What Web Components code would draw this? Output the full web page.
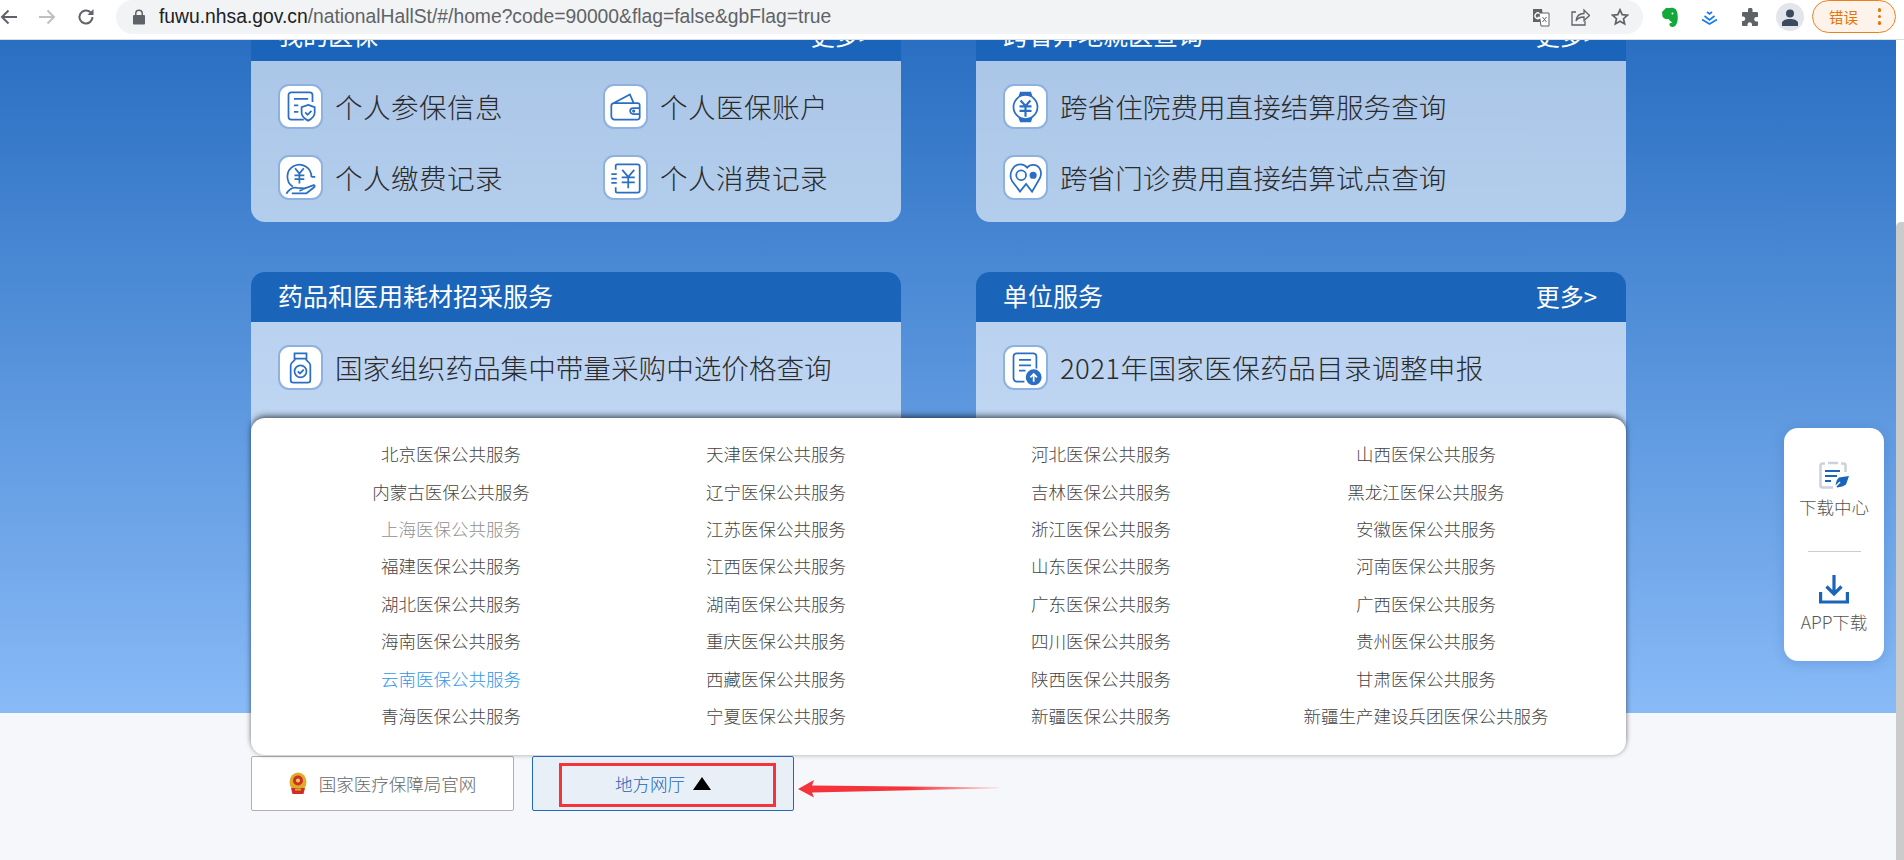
<!DOCTYPE html>
<html lang="zh">
<head>
<meta charset="utf-8">
<title>fuwu.nhsa.gov.cn</title>
<style>
html,body{margin:0;padding:0;height:860px;overflow:hidden;background:#f5f7fb;}
body{font-family:"Noto Sans CJK SC","Liberation Sans",sans-serif;display:flex;flex-direction:column;}
</style>
</head>
<body>
<browser-bar url-host="fuwu.nhsa.gov.cn" url-path="/nationalHallSt/#/home?code=90000&amp;flag=false&amp;gbFlag=true"></browser-bar>
<page-view>
  <service-card title="我的医保" more style="--body-h:161px">
    <div class="two" style="letter-spacing:.4px">
      <service-item icon="policy">个人参保信息</service-item>
      <service-item icon="wallet">个人医保账户</service-item>
      <service-item icon="pay">个人缴费记录</service-item>
      <service-item icon="bill">个人消费记录</service-item>
    </div>
  </service-card>
  <service-card title="跨省异地就医查询" more style="--body-h:161px">
    <service-item icon="watch">跨省住院费用直接结算服务查询</service-item>
    <service-item icon="pin">跨省门诊费用直接结算试点查询</service-item>
  </service-card>
  <service-card title="药品和医用耗材招采服务" style="--body-h:161px">
    <service-item icon="bottle">国家组织药品集中带量采购中选价格查询</service-item>
  </service-card>
  <service-card title="单位服务" more style="--body-h:161px">
    <service-item icon="upload" style="letter-spacing:.35px">2021年国家医保药品目录调整申报</service-item>
  </service-card>
</page-view>
<script>
const ICONS = {
  policy:'<path d="M19 28H7.500A2.500 2.500 0 0 1 5 25.500v-20A2.500 2.500 0 0 1 7.500 3h17A2.500 2.500 0 0 1 27 5.500V12M10 9h13M10 15h4M10 21h4"/><path d="M23 14.500l6 2.200v5c0 3.300-2.700 5.500-6 7.300-3.300-1.800-6-4-6-7.300v-5z"/><path d="M20.300 21.500l2.200 2.200 3.500-3.700"/>',
  wallet:'<path d="M6 13h21a2 2 0 0 1 2 2v11a2 2 0 0 1-2 2H6a3 3 0 0 1-3-3V15.500A2.500 2.500 0 0 1 5.500 13zM4 13.500L20 5l3.500 8"/><path d="M29 17.500h-6a2.500 2.500 0 0 0 0 5.500h6"/><circle cx="23.500" cy="20.200" r=".7"/>',
  pay:'<path d="M26 15.500a11 11 0 1 0-17 9M26 15.500h3.500"/><path d="M11 7.500l4 5 4-5M10.500 14h9M10.500 17.500h9M15 12.500v9"/><path d="M3 31c3-5 6-6.500 10-5.500l7 .5-5 2.500M20 26l8-3c1 0 1.500 1 .5 2l-7 5.500H8"/>',
  bill:'<path d="M7 9V5.500A1.500 1.500 0 0 1 8.500 4H27a2 2 0 0 1 2 2v22a2 2 0 0 1-2 2H8.500A1.500 1.500 0 0 1 7 28.500V25"/><path d="M3 13h5M3 17h5M3 21h5"/><path d="M13 9l5.500 6.500L24 9M12.500 16h12M12.500 20.500h12M18.500 15.500V26"/>',
  watch:'<circle cx="16" cy="16.500" r="11"/><path fill="#2a6fc4" stroke="none" d="M9.500 7l1.500-4.500h10L22.500 7c-4-2-9-2-13 0zM9.500 26l1.500 4.500h10l1.500-4.500c-4 2-9 2-13 0z"/><path stroke-width="2" d="M11.500 10.500l4.500 5 4.500-5M10.500 16h11M10.500 20h11M16 15.500V25.500"/>',
  pin:'<path d="M11 29L3.500 19C0 12 5 4 11.500 4c2.500 0 4.500 1 6 3 1.500-2 3.500-2.500 5.500-2.500 6 0 9 6.500 6 12.500L22 29l-5.500-7z"/><circle cx="12" cy="14" r="4.500"/><circle cx="23" cy="14" r="2.500" fill="#2a6fc4"/>',
  bottle:'<path d="M10.500 3h11v5h-11z"/><path d="M11 8c0 2.500-4 3-4 6v13.500A2.500 2.500 0 0 0 9.500 30h13a2.500 2.500 0 0 0 2.500-2.500V14c0-3-4-3.500-4-6"/><circle cx="16" cy="19.500" r="5.500"/><path d="M13.500 19.500l2 2 3.500-3.500"/>',
  upload:'<path d="M15 29H8a3 3 0 0 1-3-3V6a3 3 0 0 1 3-3h15a3 3 0 0 1 3 3v11M10 9h11M10 14h11M10 19h6"/><circle cx="23.500" cy="25" r="6.500" fill="#2a6fc4"/><path stroke="#fff" d="M23.500 29v-7M20.500 25l3-3 3 3"/>'
};

class BrowserBar extends HTMLElement{
  constructor(){
    super();
    this.attachShadow({mode:"open"});
  }
  connectedCallback(){
    this.shadowRoot.innerHTML = `
    <style>
      :host{display:flex;height:39px;background:#fff;border-bottom:1px solid #dadce0;position:relative;z-index:5;font-family:"Liberation Sans",Arial,sans-serif;}
      svg{display:block;flex:none;}
      .nav{display:flex;align-items:center;height:34px;width:116px;box-sizing:border-box;}
      .nav svg:nth-child(2){margin-left:20px;}
      .nav svg:nth-child(3){margin-left:21px;}
      .omni{width:1527px;height:34px;background:#f1f3f4;border-radius:17px;display:flex;align-items:center;box-sizing:border-box;padding-left:17px;}
      .url{margin-left:14px;font-size:19.300px;color:#5f6368;white-space:nowrap;flex:1;}
      .url b{font-weight:400;color:#202124;}
      .acts{display:flex;align-items:center;gap:21px;margin-right:14px;}
      .ext{display:flex;align-items:center;height:34px;margin-left:18px;}
      .ext .ev{margin-right:23px;}
      .ext .dd{margin-right:23px;}
      .avatar{margin-left:17px;width:28px;height:28px;border-radius:50%;background:#e2e5ea;display:flex;align-items:center;justify-content:center;}
      .err{margin-left:8px;width:84px;height:33px;box-sizing:border-box;border:1.500px solid #e8821e;border-radius:17px;background:#fef3ea;color:#e37400;font:14.500px "Noto Sans CJK SC",sans-serif;display:flex;align-items:center;padding-left:16px;justify-content:space-between;padding-right:14px;margin-top:-1px;}
      .dots{display:flex;flex-direction:column;gap:3px;}
      .dots i{width:3.500px;height:3.500px;border-radius:50%;background:#e37400;display:block;}
    </style>
    <div class="nav">
      <svg width="18" height="18" viewBox="0 0 18 18" fill="none" stroke="#5f6368" stroke-width="2"><path d="M17 9H2M8.500 2.500L2 9l6.500 6.500"/></svg>
      <svg width="18" height="18" viewBox="0 0 18 18" fill="none" stroke="#bdc1c6" stroke-width="2"><path d="M1 9h15M9.500 2.500L16 9l-6.500 6.500"/></svg>
      <svg width="18" height="18" viewBox="0 0 18 18" fill="none" stroke="#5f6368" stroke-width="2"><path d="M15.500 9a6.500 6.500 0 1 1-2-4.700"/><path fill="#5f6368" stroke="none" d="M16.500 1v6h-6z"/></svg>
    </div>
    <div class="omni">
      <svg width="12" height="16" viewBox="0 0 12 16"><path fill="#5f6368" d="M2 6V4.500a4 4 0 0 1 8 0V6h1a1 1 0 0 1 1 1v7.500a1 1 0 0 1-1 1H1a1 1 0 0 1-1-1V7a1 1 0 0 1 1-1zm1.500 0h5V4.500a2.500 2.500 0 0 0-5 0z"/></svg>
      <span class="url"><b>${this.getAttribute("url-host")}</b>${this.getAttribute("url-path").replace(/&/g,"&amp;")}</span>
      <div class="acts">
        <svg width="18" height="19" viewBox="0 0 18 19"><path fill="#5f6368" d="M1 1h9l1.500 13H1z"/><path fill="#fff" stroke="#5f6368" d="M7 5h10v13H9z"/><path fill="none" stroke="#fff" stroke-width="1.300" d="M7.500 5.500A2.800 2.800 0 1 0 8 9.500H5.500"/><path stroke="#5f6368" fill="none" d="M10.500 9l4 5M14.500 9l-4 5"/></svg>
        <svg width="19" height="18" viewBox="0 0 19 18" fill="none" stroke="#5f6368" stroke-width="1.300"><path d="M5 4H1v13h13v-4"/><path d="M5 13c.5-5 3-7.500 8-7.500V2l5.500 5.500-5.500 5V9c-4 0-6.500 1-8 4z"/></svg>
        <svg width="18" height="18" viewBox="0 0 18 18" fill="none" stroke="#5f6368" stroke-width="1.700"><path d="M9 1.800l2.200 4.800 5.200.6-3.900 3.500 1.100 5.200L9 13.300l-4.600 2.600 1.100-5.200-3.900-3.500 5.200-.6z"/></svg>
      </div>
    </div>
    <div class="ext">
      <svg class="ev" width="17" height="21" viewBox="0 0 17 21"><path fill="#12a83b" d="M1 5L5 1h4c4-1 7 1 7.500 6 .5 4 .5 8-1.500 11-1.500 2.500-6 2.500-6.500 0-.5-2 2-3 3-1.500-.5-2-3-2.500-4-4.500-2.500.5-5-.5-6-2.500z"/><circle cx="11.500" cy="6.500" r="1" fill="#fff"/></svg>
      <svg class="dd" width="17" height="15" viewBox="0 0 17 15" fill="none" stroke="#1a7bf0" stroke-width="1.700"><path d="M6 2l2.500 2L11 2M3.500 6l5 4 5-4M1 9.500l7.500 4.500 7.500-4.500"/></svg>
      <svg width="18" height="18" viewBox="0 0 18 18"><path fill="#5f6368" d="M7 1.500a2.300 2.300 0 0 1 4.500 0V4H16a1 1 0 0 1 1 1v4h-2a2.300 2.300 0 0 0 0 4.500h2V17a1 1 0 0 1-1 1H11v-2a2.300 2.300 0 0 0-4.500 0v2H2a1 1 0 0 1-1-1v-4H2.500a2.300 2.300 0 0 0 0-4.500H1V5a1 1 0 0 1 1-1h5z"/></svg>
      <div class="avatar"><svg width="16" height="17" viewBox="0 0 16 17"><circle cx="8" cy="4.500" r="4" fill="#3c4a5f"/><path fill="#3c4a5f" d="M0 17v-3c0-2.500 4-4 8-4s8 1.500 8 4v3z"/></svg></div>
      <div class="err"><span>错误</span><span class="dots"><i></i><i></i><i></i></span></div>
    </div>`;
  }
}

class PageView extends HTMLElement{
  constructor(){
    super();
    this.attachShadow({mode:"open"});
  }
  connectedCallback(){
    const names = [
      "北京","天津","河北","山西","内蒙古","辽宁","吉林","黑龙江",
      "上海","江苏","浙江","安徽","福建","江西","山东","河南",
      "湖北","湖南","广东","广西","海南","重庆","四川","贵州",
      "云南","西藏","陕西","甘肃","青海","宁夏","新疆","新疆生产建设兵团"];
    const links = names.map(n=>{
      let c = n==="上海" ? "off" : n==="云南" ? "on" : "";
      return `<a class="${c}">${n}医保公共服务</a>`;
    }).join("");
    this.shadowRoot.innerHTML = `
    <style>
      :host{display:flex;flex:1;min-height:0;position:relative;overflow:hidden;}
      .scroll{flex:1;min-width:0;display:flex;flex-direction:column;}
      .hero{height:673px;flex:none;background:linear-gradient(180deg,#2a6fc2 0%,#88baf7 100%);box-sizing:border-box;overflow:hidden;}
      .grid{display:grid;grid-template-columns:650px 650px;column-gap:75px;row-gap:50px;margin:-29px 0 0 251px;width:1375px;}
      .foot{position:relative;margin:43px 0 0 251px;width:1375px;display:flex;gap:18px;}
      .bar{width:8px;flex:none;display:flex;flex-direction:column;background:#fff;}
      .bar i{display:block;margin-top:182px;flex:1;background:#cbcbcb;border-top-left-radius:5px;}
      .menu{position:absolute;left:0;bottom:calc(100% + 1px);width:1375px;height:337px;box-sizing:border-box;background:#fff;border-radius:14px;padding:17px 37.500px 0;
        box-shadow:0 -3px 6px -1px rgba(0,0,0,.6),0 1px 4px rgba(0,0,0,.16);
        display:grid;grid-template-columns:repeat(4,325px);grid-auto-rows:37.400px;align-items:center;justify-items:center;font-size:17.500px;font-weight:300;color:#444;}
      .menu a{white-space:nowrap;}
      .menu a.off{color:#909090;}
      .menu a.on{color:#2e95ea;}
      .btn{width:263px;height:55px;box-sizing:border-box;border:1px solid #b0b0b0;border-radius:2px;background:#fff;display:flex;align-items:center;justify-content:center;font-size:17.500px;font-weight:300;color:#666;gap:12px;}
      .btn.local{width:262px;border-color:#2068bc;background:#e8eff7;color:#1a65b9;gap:8px;position:relative;}
      .btn svg{display:block;}
      .mark{position:absolute;left:26px;top:6px;width:217px;height:44px;box-sizing:border-box;border:3px solid #f5333a;}
      .arrow{position:absolute;left:547px;top:24px;}
    </style>
    <div class="scroll">
      <div class="hero">
        <div class="grid"><slot></slot></div>
      </div>
      <div class="foot">
        <div class="menu">${links}</div>
        <div class="btn">
          <svg width="18" height="23" viewBox="0 0 18 23"><ellipse cx="9" cy="10" rx="8.500" ry="9.500" fill="#e2a92a"/><circle cx="9" cy="8.500" r="5" fill="#cc2f26"/><circle cx="9" cy="8.500" r="2" fill="#f3d25a"/><path fill="#cc2f26" d="M2 16h14l-1.500 6h-11z"/><path fill="#e2a92a" d="M6 16.500h6v2H6z"/></svg>
          <span>国家医疗保障局官网</span>
        </div>
        <div class="btn local">
          <span>地方网厅</span>
          <svg width="18" height="13" viewBox="0 0 18 13"><path d="M9 0l9 13H0z" fill="#000"/></svg>
          <div class="mark"></div>
        </div>
        <svg class="arrow" width="201" height="18" viewBox="0 0 201 18"><defs><linearGradient id="ar" x1="0" x2="1"><stop offset=".55" stop-color="#f5333a"/><stop offset="1" stop-color="#f5333a" stop-opacity=".15"/></linearGradient></defs><path fill="url(#ar)" d="M0 9L16 0l-2 5.500L201 7.500v.8L14 12.500l2 5z"/></svg>
      </div>
    </div>
    <div class="bar"><i></i></div>
    <side-tools></side-tools>`;
  }
}

class ServiceCard extends HTMLElement{
  constructor(){
    super();
    this.attachShadow({mode:"open"});
  }
  connectedCallback(){
    const more = this.hasAttribute("more") ? "<span>更多&gt;</span>" : "";
    this.shadowRoot.innerHTML = `
    <style>
      :host{display:block;width:650px;border-radius:14px;overflow:hidden;}
      header{height:50px;box-sizing:border-box;padding:0 29px 4px 27px;background:#1a65b9;color:#fff;display:flex;align-items:center;justify-content:space-between;font-size:25px;}
      header span{font-size:24px;}
      .body{background:rgba(255,255,255,.6);height:var(--body-h);box-sizing:border-box;padding:23px 27px 0;display:flex;flex-direction:column;gap:26px;}
      ::slotted(.two){display:grid;grid-template-columns:325px 1fr;gap:26px 0;}
    </style>
    <header><b style="font-weight:400">${this.getAttribute("title")}</b>${more}</header>
    <div class="body"><slot></slot></div>`;
  }
}

class ServiceItem extends HTMLElement{
  constructor(){
    super();
    this.attachShadow({mode:"open"});
  }
  connectedCallback(){
    this.shadowRoot.innerHTML = `
    <style>
      :host{display:flex;align-items:center;gap:12px;height:45px;font-size:27.600px;font-weight:300;color:#2b2b2b;white-space:nowrap;}
      .tile{width:45px;height:45px;box-sizing:border-box;background:#fff;border:2px solid #8eb2e0;border-radius:11px;display:flex;align-items:center;justify-content:center;flex:none;}
      svg{display:block;}
      span{padding-bottom:2px;}
    </style>
    <div class="tile"><svg width="35" height="36" viewBox="0 0 32 33" fill="none" stroke="#2a6fc4" stroke-width="1.600">${ICONS[this.getAttribute("icon")]}</svg></div>
    <span><slot></slot></span>`;
  }
}
customElements.define("service-item", ServiceItem);

class SideTools extends HTMLElement{
  constructor(){
    super();
    this.attachShadow({mode:"open"});
  }
  connectedCallback(){
    this.shadowRoot.innerHTML = `
    <style>
      :host{position:absolute;left:1784px;top:388px;width:100px;height:233px;background:#fff;border-radius:14px;box-shadow:0 2px 12px rgba(30,80,160,.22);display:flex;flex-direction:column;align-items:center;font-size:17.500px;font-weight:300;color:#555;box-sizing:border-box;padding-top:33px;}
      span{line-height:24px;}
      hr{width:53px;height:1px;border:0;background:#ccc;margin:32px 0 23px;}
      svg{display:block;}
      .t1{margin-top:6px;}
      .t2{margin-top:6px;}
    </style>
    <svg width="30" height="28" viewBox="0 0 30 28"><path fill="none" stroke="#ccd2dc" stroke-width="2.500" d="M6 2.500H3.500A2 2 0 0 0 1.500 4.500v20a2 2 0 0 0 2 2H14M22 2.500h2.500a2 2 0 0 1 2 2V11M9 2h10"/><path fill="none" stroke="#1a65b9" stroke-width="2.200" d="M6 10h15M6 15h12M6 20h6"/><path fill="#1a65b9" d="M30 15l-3 8.500c-2 1.500-5 2.500-9 3l-.5-1 4-4-1-1-4 4c.5-3.500 1.500-6.500 3.500-8z"/></svg>
    <span class="t1">下载中心</span>
    <hr>
    <svg width="30" height="29" viewBox="0 0 30 29" fill="none" stroke="#1a65b9" stroke-width="3.200"><path d="M15 0v19M7.500 11.500L15 19l7.500-7.500"/><path d="M1.600 17v10h26.800V17"/></svg>
    <span class="t2">APP下载</span>`;
  }
}

customElements.define("browser-bar", BrowserBar);
customElements.define("service-card", ServiceCard);
customElements.define("side-tools", SideTools);
customElements.define("page-view", PageView);
</script>
</body>
</html>
